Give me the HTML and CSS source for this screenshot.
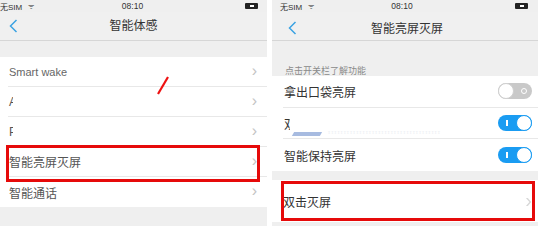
FILE: index.html
```html
<!DOCTYPE html>
<html>
<head>
<meta charset="utf-8">
<link rel="stylesheet" href="styles.css">
</head>
<body>
<div class="page">
  <section class="phone left">
    <div class="status">
      <span class="sim">无SIM <span class="sig">ᯤ</span></span>
      <span class="time">08:10</span>
      <span class="batt"><i></i></span>
    </div>
    <div class="nav">
      <svg class="back" width="9" height="14" viewBox="0 0 9 14"><path d="M7.5 1 L1.5 7 L7.5 13" fill="none" stroke="#3ba2e2" stroke-width="1.5"/></svg>
      <span class="title">智能体感</span>
    </div>
    <div class="gap16"></div>
    <div class="list">
      <div class="row"><span class="label latin">Smart wake</span><span class="chev">›</span></div>
      <div class="row"><span class="label">A</span><span class="cover c1"></span><span class="chev">›</span></div>
      <div class="row"><span class="label">P</span><span class="cover c1"></span><span class="chev">›</span></div>
      <div class="row"><span class="label">智能亮屏灭屏</span><span class="chev">›</span></div>
      <div class="row last"><span class="label">智能通话</span><span class="chev">›</span></div>
      <div class="redbox lbox"></div>
      <svg class="slash" width="14" height="20" viewBox="0 0 14 20"><line x1="12" y1="1" x2="2" y2="18" stroke="#ee1111" stroke-width="2.2"/></svg>
    </div>
  </section>
  <section class="phone right">
    <div class="status">
      <span class="sim">无SIM <span class="sig">ᯤ</span></span>
      <span class="time">08:10</span>
      <span class="batt"><i></i></span>
    </div>
    <div class="nav">
      <svg class="back" width="9" height="14" viewBox="0 0 9 14"><path d="M7.5 1 L1.5 7 L7.5 13" fill="none" stroke="#3ba2e2" stroke-width="1.5"/></svg>
      <span class="title">智能亮屏灭屏</span>
    </div>
    <div class="hint">点击开关栏了解功能</div>
    <div class="list rlist">
      <div class="row"><span class="label dark">拿出口袋亮屏</span><span class="toggle off"><i></i></span></div>
      <div class="row"><span class="label dark">双</span><span class="cover c2"></span><span class="toggle on"><i></i></span><span class="wm"></span><span class="wmtext">ɪɪɪɪɪɪɪɪɪɪɪɪɪɪɪɪɪɪɪɪɪɪɪɪɪɪɪɪɪɪɪɪɪɪɪɪ</span></div>
      <div class="row last"><span class="label dark">智能保持亮屏</span><span class="toggle on"><i></i></span></div>
    </div>
    <div class="gap9"></div>
    <div class="list single">
      <div class="row last tall"><span class="label dark">双击灭屏</span><span class="chev blur">›</span></div>
      <div class="redbox rbox"></div>
    </div>
  </section>
</div>
</body>
</html>
```
FILE: styles.css
```css
* { box-sizing: border-box; margin: 0; padding: 0; }
html, body { width: 538px; height: 226px; overflow: hidden; background: #fff; }
body { font-family: "Liberation Sans", "Noto Sans CJK SC", sans-serif; color: #444; }
.page { display: flex; gap: 5px; height: 226px; }
.phone { background: #efefef; height: 226px; position: relative; }
.left { width: 267px; }
.right { width: 266px; }

.status { height: 12px; display: flex; align-items: center; justify-content: space-between; font-size: 8px; color: #333; position: relative; }
.left .status { padding: 0 9px 0 0; }
.right .status { padding: 0 10px 0 8px; }
.sim { display: flex; gap: 6px; align-items: center; }
.sig { font-size: 7px; }
.time { position: absolute; left: 50%; transform: translateX(-50%); top: 1px; font-size: 8.5px; }
.left .time { margin-left: -1px; }
.right .time { margin-left: -3px; }
.batt { width: 13px; height: 6px; background: #222; border-radius: 1px; display: flex; align-items: center; justify-content: center; }
.batt i { width: 4px; height: 2px; background: #fff; }

.nav { height: 29px; display: flex; align-items: center; justify-content: center; position: relative; background: #f0f0f0; border-bottom: 1px solid #d6d6d6; }
.back { position: absolute; left: 9px; top: 7px; }
.right .back { left: 16px; top: 9px; }
.title { font-size: 12px; color: #333; }
.left .title { margin-top: -3px; }
.right .title { margin-top: 3px; margin-left: 4px; }

.gap16 { height: 16px; }
.gap9 { height: 9px; }

.list { background: #fff; position: relative; }
.row { height: 30px; margin-left: 8px; padding: 0 10px 0 1px; display: flex; align-items: center; justify-content: space-between; border-bottom: 1px solid #e8e8e8; position: relative; }
.row.last { border-bottom: none; }
.label { font-size: 12px; color: #555; white-space: nowrap; }
.label.latin { font-size: 11px; color: #666; }
.label.dark { color: #333; }
.cover { position: absolute; top: 4px; height: 22px; background: #fff; }
.cover.c1 { left: 5px; width: 20px; }
.cover.c2 { left: 7px; width: 14px; }
.chev { font-size: 16px; color: #c4c4c4; line-height: 1; margin-top: -2px; }
.chev.blur { color: #d8d8d8; font-size: 20px; filter: blur(0.4px); }

.redbox { position: absolute; border: 3px solid #e60a0a; pointer-events: none; }
.lbox { left: 6px; top: 88px; width: 254px; height: 37px; }
.slash { position: absolute; left: 156px; top: 19px; }

.hint { height: 35px; padding: 23px 0 0 13px; font-size: 9px; color: #8a8a8a; }
.rlist .row { margin-left: 11px; padding-right: 6px; height: 31.7px; }
.toggle { width: 34px; height: 16px; border-radius: 8px; position: relative; display: block; }
.toggle.off { background: #c9c9c9; }
.toggle.off i { position: absolute; left: 0; top: 0; width: 16px; height: 16px; border-radius: 50%; background: #fff; border: 1px solid #d0d0d0; }
.toggle.off::after { content: ""; position: absolute; right: 5px; top: 5px; width: 6px; height: 6px; border-radius: 50%; border: 1.5px solid #fff; box-sizing: border-box; }
.toggle.on { background: #1a9cf2; }
.toggle.on i { position: absolute; right: 0; top: 0; width: 16px; height: 16px; border-radius: 50%; background: #fff; border: 1px solid #1a9cf2; }
.toggle.on::after { content: ""; position: absolute; left: 8px; top: 5px; width: 1.5px; height: 6px; background: #fff; }
.wm { position: absolute; left: 10px; top: 24px; width: 28px; height: 4px; background: #a7bbe0; transform: skewX(-30deg); }
.wmtext { position: absolute; left: 45px; top: 21px; font-size: 6px; color: #eef0f4; letter-spacing: 1px; }

.single .row.tall { height: 42px; margin-left: 1px; padding-left: 10px; padding-right: 6px; }
.rbox { left: 9px; top: 1px; width: 254px; height: 40px; }
```
